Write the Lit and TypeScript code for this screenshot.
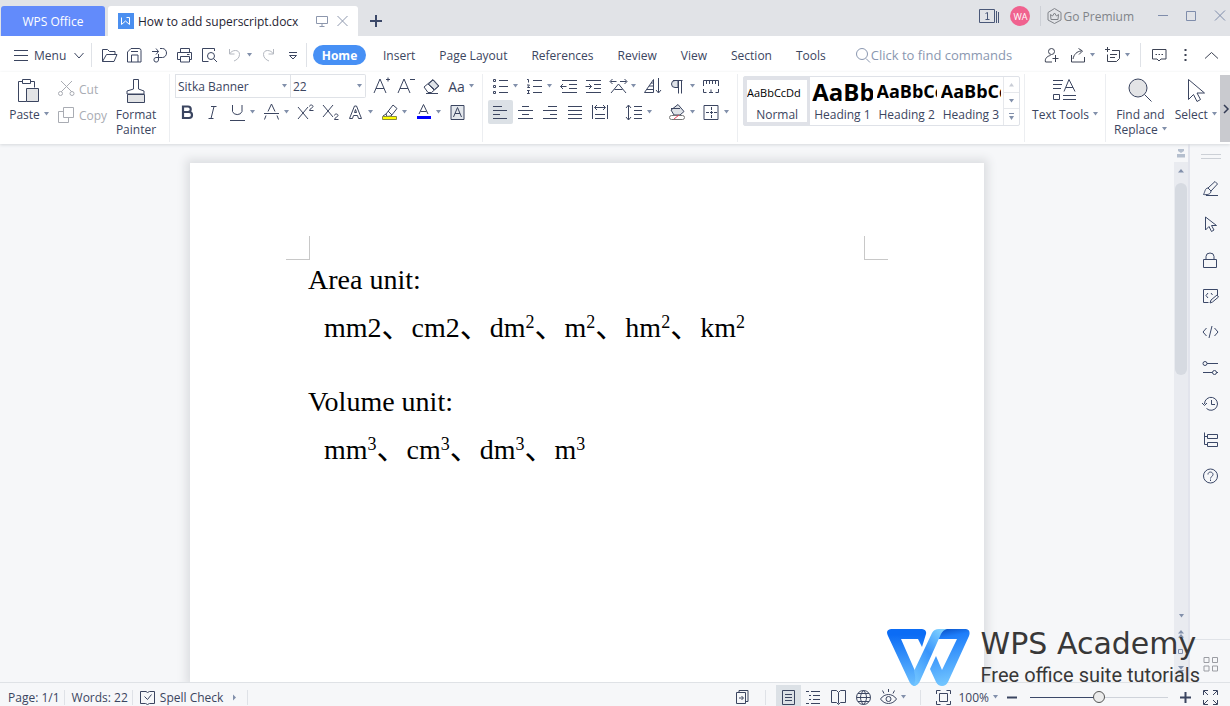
import { LitElement, html, css, svg, nothing } from "lit";
import { customElement, state } from "lit/decorators.js";
import { classMap } from "lit/directives/class-map.js";

const box = (w: number, h: number, body: unknown) =>
  html`<svg width=${w} height=${h} viewBox="0 0 ${w} ${h}" aria-hidden="true">${body}</svg>`;
const p = (d: string) => svg`<path d=${d} />`;
const fill = (d: string, c = "currentColor") => svg`<path d=${d} fill=${c} stroke="none" />`;

const ICONS: Record<string, unknown> = {
  open: p("M5.500 18.500V6.500h5l2 2h5.500v3M5.500 18.500l4-7h10.500l-3 7z"),
  save: p("M9 5.500h8a2 2 0 0 1 2 2v11.500h-13.500V9zM9.500 19v-7h6.500v7M9 8.500h7"),
  exportPdf: p("M5 8.500h6.500M9 5.500l2.500 3-2.500 3M13 5.500h2.500a4 4.500 0 0 1 0 9h-6.500a2.300 2.300 0 1 0 2.500 2.500V11"),
  print: p("M8.500 9.500v-4h9v4M8.500 16.500h-3v-7h14v7h-2M8.500 13.500h9v5.500h-9zM15 11.500h2.500"),
  preview: p("M17.500 8v-2.500h-12v13h6M17.500 13a3.500 3.500 0 1 1-7 0a3.500 3.500 0 0 1 7 0M16.500 15.500l3.500 3.500"),
  undo: p("M7.500 6v5h5M7.500 11C10 6.500 17.500 6 17.500 11.500C17.500 15 14.500 17 12 18"),
  redo: p("M17.500 6v5h-5M17.500 11C15 6.500 7.500 6 7.500 11.500C7.500 15 10.500 17 13 18"),
  more: p("M8 9.500h8M8.500 12.500h7l-3.500 3.500z"),
  userAdd: p("M15.500 8.500a3 3 0 1 1-6 0a3 3 0 0 1 6 0M13 19H6.500c-1-3 1.500-6 5-6.500M16.500 12v7M13.500 15.500h6"),
  share: p("M6.500 12v7h13v-5M8 16c1-5 4-7.500 8-8M13.500 5.500l4 2.500-3.500 3.500"),
  note: p("M5 6.500h5M7.500 4v5M12 7.500h7.500v8l-3 3h-9v-7M10 11.500h7M10 14.500h5"),
  comment: p("M5.500 6.500h13.500v9.500h-5l-2 2-2-2h-4.500zM8.500 11.500h1.500M11.500 11.500h1.500M14.500 11.500h1.500"),
  dots: fill("M11.500 6h2v2h-2zM11.500 11h2v2h-2zM11.500 16h2v2h-2z"),
  up: p("M6 15.500l6.500-6 6.500 6"),
  paste: svg`<path d="M5.500 3.500h-4v20h8M13.500 3.500h4v6M5.500 1.500h8v4h-8z" /><path d="M9.500 10.500h12v13h-12z" fill="#e3e4e6" />`,
  cut: p("M7 4l11 11M18 4L7 15M8.500 16.500a2 2 0 1 1-4 0a2 2 0 0 1 4 0M20 16.500a2 2 0 1 1-4 0a2 2 0 0 1 4 0"),
  copy: p("M9.500 4.500h10v10h-10zM9.500 8.500h-5v11h10v-5"),
  painter: svg`<path d="M10.500 11V1.500h5V11l5.500 2v3h-17v-3z" /><path d="M4.500 16.500h17v8h-17z" fill="#e3e4e6" />`,
  grow: p("M5 19l6-14 6 14M7 14.500h8M17 5.500h4M19 3.500v4"),
  shrink: p("M4 19l6-14 6 14M6 14.500h8M16 5.500h5"),
  eraser: svg`<path d="M5 13l9-7.500 6 6.500-7.500 6.500h-3.500zM9 10l6 6M7 19.500h12" /><path d="M9.500 10l4.500-4 5.500 6-4 3.500z" fill="#dfe3e8" />`,
  bold: svg`<path d="M8 6.500h5a2.700 2.700 0 0 1 0 5.500h-5zM8 12h6a3 3 0 0 1 0 6h-6z" stroke-width="2.200" />`,
  italic: p("M11 6.500h5.500M8.500 18.500h5M14 6.500l-3 12"),
  underline: p("M7.500 5v6.500a5 4.500 0 0 0 9.500 0V5M5 20.500h15"),
  strike: p("M5 13.500h15M9 11.500l3.500-7.500 3.500 7.500M7 15.500l-1.500 4M18 15.500l1.500 4"),
  sup: p("M5 7l10 12M15 7L5 19M16.500 6.500c0-2 3.500-2 3.500 0c0 1.500-3.500 2-3.500 4h4"),
  sub: p("M5 5l10 12M15 5L5 17M16.500 15.500c0-2 3.500-2 3.500 0c0 1.500-3.500 2-3.500 4h4"),
  effect: svg`<path d="M6.500 18.500l5-12.500h2l5 12.500h-3l-1-3h-4l-1 3z" /><path d="M11.500 12.500l1-3 1 3z" />`,
  highlight: svg`<path d="M9 14l7-9 4 3.500-6 7.500-4 .5zM9 14l-3 2M11 11l4 4" /><path d="M5.500 16.500h14v3h-14z" fill="#ffff00" stroke="#8a8a40" />`,
  color: svg`<path d="M8 14l4.500-9.500 4.500 9.500M9.500 11.500h6" /><path d="M6 16h14v3H6z" fill="#0000ff" stroke="none" />`,
  charBox: svg`<path d="M6 5.500h13v14H6z" fill="#e3e7ec" /><path d="M8.500 17l4-9.500 4 9.500M10 13.500h5" />`,
  bullets: p("M11 6.500h9M11 12.500h9M11 18.500h9M5.500 5.500h2v2h-2zM5.500 11.500h2v2h-2zM5.500 17.500h2v2h-2z"),
  numbers: p("M11 6.500h9M11 12.500h9M11 18.500h9M5 5.500h1.500v3M5 11h2.500l-2 2.500h2.500M5 16.500h2.500l-1.500 1.500 1.500 1.500h-2.500"),
  outdent: p("M6 6.500h15M13 10.500h8M13 14.500h8M6 18.500h15M4.500 12.500h6M7 10l-2.500 2.500 2.500 2.500"),
  indent: p("M5 6.500h15M13 10.500h7M13 14.500h7M5 18.500h15M4.500 12.500h6M8 10l2.500 2.500-2.500 2.500"),
  scale: p("M5 19l7.500-9 7.500 9M8.500 15.500h8M4.500 7.500h6M14 7.500h6.500M6.500 5l-2.500 2.500 2.500 2.500M18.500 5l2.500 2.500-2.500 2.500"),
  sort: p("M4.500 18.500h9V5.500zM7 15.500h6M9 12h4.500M11 9h2.500M18.500 4v14.500M16 16l2.500 3 2.500-3"),
  pilcrow: svg`<path d="M13 6.500h-3a3 3 0 0 0 0 7h3z" fill="#dfe3e8" /><path d="M8 6.500h9.500M13.500 6.500v13M16.500 6.500v13" />`,
  ruler: p("M4.500 12V6.500h15V12M7.500 7v3M10.500 7v3M13.500 7v3M16.500 7v3M4.500 15v3.500h3M19.500 15v3.500h-3M10 18.500h4M12 15.500v3"),
  left: p("M5 6.500h9M5 10.500h14M5 14.500h7M5 18.500h14"),
  center: p("M9 6.500h7M5 10.500h15M9 14.500h7M5 18.500h15"),
  right: p("M10 6.500h9M5 10.500h14M12 14.500h7M5 18.500h14"),
  justify: p("M5 6.500h14M5 10.500h14M5 14.500h14M5 18.500h14"),
  distribute: p("M4.500 5v14M19.500 5v14M7 14.500h10M7 18.500h10M7 7.500h10M9 5L6.500 7.500 9 10M15 5l2.500 2.500-2.500 2.500"),
  spacing: p("M6.500 5.500v14M4 8l2.500-3 2.500 3M4 17l2.500 3 2.500-3M12 6.500h8M12 10.500h8M12 14.500h8M12 18.500h8"),
  bucket: svg`<path d="M6 10l7-5.500 6 7-4 3.500h-6zM6 8.500h9" fill="#dfe3e8" /><rect x="4.500" y="15.500" width="15" height="4" rx="2" stroke="#777" fill="#fff" /><path d="M9 19l5-4" stroke="#e8405a" />`,
  border: svg`<path d="M5 5.500h14v14H5z" /><path d="M12.500 7v11M7 12.500h11" stroke-dasharray="3 1" />`,
  textTools: p("M1 2.500h10M1 6.500h9M1 10.500h8M1.500 16.500h6v5h-6zM11 17.500h13M11 21.500h13M12 13.500l5-12 6 12M14 9.500h7"),
  find: svg`<circle cx="11" cy="10" r="9" fill="#e3e4e6" /><path d="M17.500 16.500l7 7" />`,
  pointer: p("M5.500 1.500v20l5-5 3.500 7 3.500-2-3.500-6.500h7.500z"),
  brush: p("M10 12l7-6.500 2.500 2.500-6.500 7M10 12c-3 0-3 4-4.500 6.500c3 .5 7.500 0 7.500-3.500zM8 19.500h12"),
  arrow: p("M7.500 5v13l3.500-3.500 2.500 5 2.500-1.500-2.500-4.500h5z"),
  lock: p("M5.500 11.500h13v8h-13zM8 11V8.500a4 3.500 0 0 1 8 0V11"),
  macro: p("M19.500 11V5.500h-14v13h5M10 9l-2 2.500 2 2.500M13 9l1.500 2M12 19l1-3 6-5 1.500 2-6 5z"),
  code: p("M8.500 8L5 12l3.500 4M16.500 8l3.500 4-3.500 4M14 6l-3 12"),
  sliders: p("M9 7.500h11M5 16.500h9.500M9 7.500a2 2 0 1 1-4 0a2 2 0 0 1 4 0M18.500 16.500a2 2 0 1 1-4 0a2 2 0 0 1 4 0M18.500 16.500h1.500"),
  history: p("M6.500 12a6.500 6.500 0 1 1 2 4.500M4 11l2.500 2.500L9 11M13.500 8v4.500h3.500"),
  tree: p("M6.500 4.500v12h3M6.500 8.500h3M9.500 6.500h10v4h-10zM9.500 14.500h10v4h-10z"),
  help: p("M19.500 12a7 7 0 1 1-14 0a7 7 0 0 1 14 0M10 10.500c0-3.500 5-3 5 0c0 2-2.500 2-2.500 4M12.500 15.500v1.500"),
  grid: p("M6 5.500h5v5H6zM14.500 5.500h5v5h-5zM6 14h5v5H6zM14.500 14h5v5h-5z"),
  spell: p("M11 6.500h-5.500v12h5l2 1 2-1h5v-12h-5l-2 1zM9.500 11.500l3 3 4-5"),
  pageNav: p("M6.500 7.500h9v11h-9zM9 7V5.500h9v11h-2M9 13h4M11.500 11l2 2-2 2"),
  pageView: p("M6.500 5.500h12v14h-12zM9 9.500h7M9 12.500h7M9 15.500h7"),
  outline: p("M5 6.500h3M10 6.500h9M8 10.500h2M12 10.500h7M8 14.500h2M12 14.500h7M5 18.500h3M10 18.500h9"),
  read: p("M12.500 7.500l-2-2H5.500v12h5l2 2 2-2h5v-12h-5zM12.500 7.500v11"),
  web: p("M19.500 12.500a7 7 0 1 1-14 0a7 7 0 0 1 14 0M5.500 12.500h14M12.500 5.500c-4 4-4 10 0 14c4-4 4-10 0-14M7 8.500h11M7 16.500h11"),
  eye: p("M4.500 14c4-6 12-6 16 0c-4 6-12 6-16 0M15 14a2.500 2.500 0 1 1-5 0a2.500 2.500 0 0 1 5 0M12.500 4v3M6.500 5.500l1.500 3M18.500 5.500l-1.500 3"),
  fit: p("M5.500 9V5.500h4M15.500 5.500h4V9M19.500 16v3.500h-4M9.500 19.500h-4V16M8.500 8.500h8v8h-8z"),
  minus: svg`<path d="M7 12.500h10" stroke-width="2" />`,
  plus: svg`<path d="M7 12.500h11M12.500 7v11" stroke-width="2" />`,
  full: p("M5.500 10V5.500H10M6 6l4 4M15 5.500h4.500V10M19 6l-4 4M19.500 15v4.500H15M19 19l-4-4M10 19.500H5.500V15M6 19l4-4"),
};

const icon = (name: string, w = 25, h = 24) => box(w, h, ICONS[name]);
const caret = () => box(5, 4, fill("M0 0h5L2.500 3.500z", "#8290ab"));

type Tool = { id: string; label: string; drop?: boolean; gap?: boolean; on?: boolean; dim?: boolean };
const t = (id: string, label: string, opts: Partial<Tool> = {}): Tool => ({ id, label, ...opts });
const drop = { drop: true };

const QUICK = [t("open", "Open"), t("save", "Save"), t("exportPdf", "Export to PDF"), t("print", "Print"), t("preview", "Print preview"),
  t("undo", "Undo", { drop: true, dim: true }), t("redo", "Redo", { dim: true }), t("more", "Customize")];
const TABS = ["Insert", "Page Layout", "References", "Review", "View", "Section", "Tools"];
const FONT1 = [t("grow", "Increase font size"), t("shrink", "Decrease font size"), t("eraser", "Clear formatting")];
const FONT2 = [t("bold", "Bold"), t("italic", "Italic"), t("underline", "Underline", drop), t("strike", "Strikethrough", drop),
  t("sup", "Superscript"), t("sub", "Subscript"), t("effect", "Text effects", drop), t("highlight", "Highlight", drop),
  t("color", "Font color", drop), t("charBox", "Character shading")];
const PARA1 = [t("bullets", "Bullets", drop), t("numbers", "Numbering", drop), t("outdent", "Decrease indent"), t("indent", "Increase indent"),
  t("scale", "Character scaling", drop), t("sort", "Sort"), t("pilcrow", "Paragraph marks", drop), t("ruler", "Tabs")];
const PARA2 = [t("left", "Align left", { on: true }), t("center", "Center"), t("right", "Align right"), t("justify", "Justify"),
  t("distribute", "Distribute", { gap: true }), t("spacing", "Line spacing", { drop: true, gap: true }), t("bucket", "Shading", drop), t("border", "Borders", drop)];
const SIDE = [t("brush", "Styles"), t("arrow", "Select"), t("lock", "Protect"), t("macro", "Edit code"), t("code", "Source"),
  t("sliders", "Settings"), t("history", "History"), t("tree", "Structure"), t("help", "Help")];
const STYLES = [["AaBbCcDd", "Normal", "s0"], ["AaBb", "Heading 1", "s1"], ["AaBbCc", "Heading 2", "s2"], ["AaBbCc", "Heading 3", "s2"]];

const AREA: [string, string, boolean][] = [["mm", "2", false], ["cm", "2", false], ["dm", "2", true], ["m", "2", true], ["hm", "2", true], ["km", "2", true]];
const VOLUME: [string, string, boolean][] = [["mm", "3", true], ["cm", "3", true], ["dm", "3", true], ["m", "3", true]];

@customElement("app-root")
export class AppRoot extends LitElement {
  @state() private zoom = 50;

  static styles = css`
    :host { display: flex; flex-direction: column; height: 100vh; position: relative; overflow: hidden;
      font: 12px/15px "Open Sans", "Noto Sans", sans-serif; color: #3b4560; background: #f6f7f9; }
    * { box-sizing: border-box; }
    svg { display: block; flex: none; fill: none; stroke: currentColor; }
    button, input, select { font: inherit; color: inherit; border: 0; margin: 0; padding: 0; background: none; }
    button { display: flex; align-items: center; white-space: nowrap; }
    .grow { flex: 1; }
    .dim { color: #b4b8c0; }
    .split { display: flex; align-items: center; }
    .split.gap { margin-right: 9px; }
    .drop { width: 9px; height: 24px; }
    .on { background: #dce1e6; border-radius: 2px; }
    .vline { width: 1px; height: 24px; background: #dfe2e7; flex: none; }

    .title { display: flex; height: 36px; background: #e1e3e7; padding-left: 1px; flex: none; }
    .office, .doc { height: 30px; margin-top: 6px; border-radius: 3px 3px 0 0; display: flex; align-items: center; }
    .office { width: 104px; justify-content: center; background: #628bfb; color: #fff; }
    .doc { width: 250px; margin-left: 3px; padding: 0 10px; background: #fff; color: #1f2433; white-space: nowrap; }
    .doc span { margin: 0 auto 0 4px; }
    .doc button { margin-left: 9px; color: #8d97ad; }
    .add { margin: 6px 0 0 12px; color: #3b4868; }
    .window { display: flex; align-items: center; height: 32px; margin-left: auto; color: #4a5878; }
    .window .vline { height: 20px; background: #cdd0d6; }
    .avatar { width: 20px; height: 20px; margin: 0 10px; border-radius: 50%; background: #f0628f; color: #fff; font-size: 9px; justify-content: center; }
    .premium { color: #808389; margin: 0 21px 0 6px; gap: 1px; }
    .win { color: #7f8dab; margin-right: 4px; }

    .menu { display: flex; align-items: center; height: 36px; padding: 2px 6px 0 9px; background: #fff; flex: none; }
    .main { width: 82px; }
    .main span { margin-right: auto; }
    .quick { display: flex; padding: 0 0 0 5px; }
    nav { display: flex; align-items: center; margin-left: 6px; }
    nav button { padding: 0 12px; height: 20px; }
    nav .home { width: 53px; padding: 0; justify-content: center; border-radius: 10px; background: #4790f5; color: #fff; font-weight: 700; margin-right: 5px; }
    .search { display: flex; align-items: center; margin-left: 15px; flex: 1; color: #8a97b0; min-width: 0; }
    .search input { width: 100%; font-size: 13px; outline: 0; }
    .search input::placeholder { color: #8a97b0; opacity: 1; }
    .right { display: flex; align-items: center; gap: 1px; color: #3d4354; }
    .right .vline { margin: 0 5px; }

    .ribbon { display: flex; height: 72px; background: #fff; padding-top: 2px; flex: none; box-shadow: 0 1px 3px #d5d8dc; position: relative; }
    .group { display: flex; padding: 0 4px 0 5px; border-right: 1px solid #eceef1; height: 68px; flex: none; }
    .group.first { padding: 0 8px 0 4px; }
    .rows { display: flex; flex-direction: column; gap: 2px; }
    .row { display: flex; height: 24px; }
    .big { flex-direction: column; padding-top: 4px; text-align: center; }
    .big .lab { margin-top: 3px; display: block; }
    .first .big { width: 50px; }
    .lab svg { display: inline-block; vertical-align: 3px; margin-left: 4px; }
    .clip { display: flex; flex-direction: column; padding-top: 2px; color: #a9acb3; width: 57px; }
    .clip button { height: 26px; }
    .field { display: grid; align-items: center; border: 1px solid #dfe2e7; width: 116px; }
    .field select { grid-area: 1 / 1; width: 100%; height: 22px; appearance: none; padding-left: 2px; outline: 0; }
    .field svg { grid-area: 1 / 1; justify-self: end; margin-right: 3px; pointer-events: none; }
    .size { width: 75px; margin-right: 3px; border-left: 0; border-radius: 0 2px 2px 0; }
    .aa { width: 25px; justify-content: center; font-size: 14px; }
    .styles { display: flex; width: 277px; height: 50px; margin-top: 2px; border: 1px solid #dfe2e8; border-radius: 2px; }
    .style { flex: 1; flex-direction: column; justify-content: flex-end; min-width: 0; padding: 0 2px 3px; overflow: hidden; }
    .style.sel { border: 3px solid #e0e2e8; padding: 0; }
    .style b { flex: 1; display: flex; align-items: center; color: #000; align-self: stretch; overflow: hidden; margin-bottom: 2px; }
    .style .s0 { font-weight: 400; font-size: 11px; }
    .s1 { font-size: 24px; }
    .s2 { font-size: 18px; }
    .scrollers { display: grid; width: 16px; grid-template-rows: repeat(3, 1fr); border-left: 1px solid #e6e8ec; }
    .scrollers button { justify-content: center; border-bottom: 1px solid #e6e8ec; color: #8290ab; }
    .scrollers button:last-child { border: 0; }
    .scrollers .dim { color: #c9cdd6; }
    .tt { width: 81px; justify-content: center; padding: 0; }
    .last { border: 0; padding: 0 0 0 8px; gap: 8px; }
    .expand { width: 10px; height: 67px; margin: 1px 0 0 auto; background: #c9cacf; color: #333c55; flex: none; }

    .work { flex: 1; display: flex; min-height: 0; }
    main { flex: 1; display: flex; justify-content: center; overflow: hidden; padding-top: 19px; min-width: 0; }
    .page { width: 794px; background: #fff; box-shadow: 0 0 9px 4px #dcdee1; flex: none; padding: 73px 96px 0; }
    .marks { display: flex; justify-content: space-between; }
    .marks i { width: 24px; height: 24px; border: solid #c8c8c8; border-width: 0 1px 1px 0; }
    .marks i + i { border-width: 0 0 1px 1px; }
    .text { padding: 0 22px; font: 28px/40px "Liberation Serif", "Noto Sans CJK SC", serif; color: #000; white-space: nowrap; }
    .text p { margin: 0 0 8px; }
    .text .units { padding-left: 16px; margin-bottom: 34px; }
    .sep { font: 30px/28px "Noto Sans CJK SC", sans-serif; }
    sup { font-size: 18px; line-height: 0; vertical-align: 9px; }

    .bar { width: 14px; display: flex; flex-direction: column; align-items: center; background: #e9ebf0; color: #8290ab; padding-bottom: 3px; }
    .bar .toggle { width: 14px; height: 18px; background: #f6f7f9; justify-content: center; }
    .bar .track { flex: 1; padding-top: 3px; }
    .bar .thumb { width: 12px; height: 192px; border-radius: 6px; background: #d6dae1; }
    .bar button { height: 18px; }
    .side { width: 42px; display: flex; flex-direction: column; gap: 12px; padding: 0 0 0 8px; border-left: 2px solid #e2e4ec; color: #3b4868; }
    .handle { width: 20px; height: 5px; margin: 10px 0 5px 3px; border: solid #ccd0d6; border-width: 1px 0; }
    .all { margin: auto 0 0 -8px; padding: 12px 0 6px 8px; border-top: 1px solid #e0e3e8; color: #9b9da3; }

    footer { display: flex; align-items: center; height: 24px; border-top: 1px solid #dfe2e6; background: #f6f7f9; padding: 5px 7px 0 8px; flex: none; }
    footer .vline { height: 15px; margin: 0 2px 0 4px; }
    footer .wide { margin: 0 10px; }
    .words { padding-left: 5px; }
    .percent { padding: 0 2px; }
    .views { display: flex; }
    .active { background: #dce1e6; }
    .zoom { width: 138px; height: 16px; margin: 0 5px; appearance: none; outline: 0; }
    .zoom::-webkit-slider-runnable-track { height: 1px; background: linear-gradient(90deg, #3b4868 50%, #cfd3da 50%); }
    .zoom::-webkit-slider-thumb { appearance: none; width: 12px; height: 12px; margin-top: -6px; border: 1px solid #555; border-radius: 50%; background: #ececec; }

    .brand { position: absolute; right: 30px; bottom: 17px; display: flex; gap: 11px; pointer-events: none; color: #383838; white-space: nowrap; }
    .brand svg { stroke: none; margin-top: 2px; }
    .brand .name { font: 30px/34px "DejaVu Sans", sans-serif; }
    .brand .tag { font: 20px/28px Roboto, sans-serif; }
  `;

  private tool(x: Tool) {
    return html`<div class=${classMap({ split: true, gap: !!x.gap, dim: !!x.dim })}>
      <button class=${classMap({ on: !!x.on })} aria-label=${x.label}>${icon(x.id)}</button>
      ${x.drop ? html`<button class="drop" aria-label="${x.label} options">${caret()}</button>` : nothing}
    </div>`;
  }

  private units(list: [string, string, boolean][]) {
    return html`<p class="units">${list.map(([u, n, raised], i) =>
      html`${i ? html`<span class="sep">、</span>` : nothing}${u}${raised ? html`<sup>${n}</sup>` : n}`)}</p>`;
  }

  private titleBar() {
    return html`<header class="title">
      <button class="office">WPS Office</button>
      <div class="doc">
        ${box(16, 16, svg`<path d="M0 0h16v16H0z" fill="#4b8ff0" stroke="none" /><path d="M3.500 4.500v7l4-3.500 4 3.500v-7h-3" stroke="#fff" />`)}
        <span>How to add superscript.docx</span>
        <button aria-label="Present">${box(12, 12, p("M.5 1.500h11v7H.5zM6 8.500v2.500M3.500 11.500h5"))}</button>
        <button aria-label="Close tab">${box(11, 12, p("M.5 1l10 10M10.500 1l-10 10"))}</button>
      </div>
      <button class="add" aria-label="New tab">${box(13, 12, svg`<path d="M6 0v12M0 6h12" stroke-width="2" />`)}</button>
      <div class="window">
        <button aria-label="Open windows">${box(21, 16, svg`<path d="M.5 1.500h15v13H.500zM17.500 3v12M19.500 4v11M6.500 5.500L8.500 4.500v7M6.500 11.500h4" />`)}</button>
        <button class="avatar" aria-label="Account">WA</button>
        <span class="vline"></span>
        <button class="premium">${box(15, 16, p("M7.500 .5l6.500 4v7.500l-6.500 3.500-6.500-3.500V4.500zM4 11.500L3.500 6.500l2 1.500 2-3 2 3 2-1.500-.5 5z"))}Go Premium</button>
        <button class="win" aria-label="Minimize">${box(24, 24, p("M3 11.500h10"))}</button>
        <button class="win" aria-label="Maximize">${box(24, 24, p("M3.500 7.500h9v9h-9z"))}</button>
        <button class="win" aria-label="Close">${box(15, 24, p("M4 6.500l10 10M14 6.500l-10 10"))}</button>
      </div>
    </header>`;
  }

  private menuBar() {
    return html`<div class="menu">
      <button class="main">${box(25, 24, p("M5 7.500h14M5 12.500h14M5 17.500h14"))}<span>Menu</span>${box(20, 24, p("M3.500 10l4.500 5 4.500-5"))}</button>
      <span class="vline"></span>
      <div class="quick">${QUICK.map((x) => this.tool(x))}</div>
      <span class="vline"></span>
      <nav><button class="home">Home</button>${TABS.map((x) => html`<button>${x}</button>`)}</nav>
      <label class="search">${box(18, 24, p("M14.500 11a5 5 0 1 1-11 0a5.500 5.500 0 0 1 11 0M13 15.500l4 4"))}
        <input type="text" aria-label="Search commands" placeholder="Click to find commands" /></label>
      <div class="right">
        ${this.tool(t("userAdd", "Collaborate"))}${this.tool(t("share", "Share", drop))}${this.tool(t("note", "Annotate", drop))}
        <span class="vline"></span>
        ${this.tool(t("comment", "Comments"))}${this.tool(t("dots", "More"))}${this.tool(t("up", "Collapse ribbon"))}
      </div>
    </div>`;
  }

  private ribbon() {
    return html`<div class="ribbon">
      <div class="group first">
        <button class="big">${icon("paste", 24, 26)}<span class="lab">Paste${caret()}</span></button>
        <div class="clip">
          <button>${icon("cut", 25, 24)}Cut</button>
          <button>${icon("copy", 25, 24)}Copy</button>
        </div>
        <button class="big">${icon("painter", 26, 26)}<span class="lab">Format<br />Painter</span></button>
      </div>
      <div class="group">
        <div class="rows">
          <div class="row">
            <div class="field"><select aria-label="Font"><option>Sitka Banner</option></select>${caret()}</div>
            <div class="field size"><select aria-label="Font size"><option>22</option></select>${caret()}</div>
            ${FONT1.map((x) => this.tool(x))}
            <div class="split"><button class="aa" aria-label="Change case">Aa</button><button class="drop" aria-label="Case options">${caret()}</button></div>
          </div>
          <div class="row">${FONT2.map((x) => this.tool(x))}</div>
        </div>
      </div>
      <div class="group">
        <div class="rows">
          <div class="row">${PARA1.map((x) => this.tool(x))}</div>
          <div class="row">${PARA2.map((x) => this.tool(x))}</div>
        </div>
      </div>
      <div class="group">
        <div class="styles">
          ${STYLES.map(([sample, name, cls], i) => html`<button class=${classMap({ style: true, sel: i === 0 })}><b class=${cls}>${sample}</b>${name}</button>`)}
          <div class="scrollers">
            <button class="dim" aria-label="Previous styles">${box(5, 4, fill("M0 3.500h5L2.500 0z"))}</button>
            <button aria-label="Next styles">${caret()}</button>
            <button aria-label="All styles">${box(5, 8, svg`<path d="M0 .5h5" />${fill("M0 3h5L2.500 7z")}`)}</button>
          </div>
        </div>
      </div>
      <div class="group tt"><button class="big">${icon("textTools", 26, 26)}<span class="lab">Text Tools${caret()}</span></button></div>
      <div class="group last">
        <button class="big">${icon("find", 26, 26)}<span class="lab">Find and<br />Replace${caret()}</span></button>
        <button class="big">${icon("pointer", 26, 26)}<span class="lab">Select${caret()}</span></button>
      </div>
      <button class="expand" aria-label="More tools">${box(10, 10, svg`<path d="M4 1l4 4-4 4" stroke-width="1.500" />`)}</button>
    </div>`;
  }

  private status() {
    const view = (id: string, label: string, on = false) => html`<button class=${classMap({ active: on })} aria-label=${label}>${icon(id)}</button>`;
    return html`<footer>
      <span>Page: 1/1</span><span class="vline"></span>
      <span class="words">Words: 22</span><span class="vline"></span>
      <button>${icon("spell")}Spell Check${box(20, 24, fill("M10 9.500v6l3-3z", "#8290ab"))}</button><span class="vline"></span>
      <span class="grow"></span>
      ${view("pageNav", "Page navigation")}<span class="vline wide"></span>
      <div class="views">
        ${view("pageView", "Print layout", true)}${view("outline", "Outline")}${view("read", "Reading")}${view("web", "Web layout")}${this.tool(t("eye", "Eye protection", drop))}
      </div>
      <span class="vline wide"></span>
      ${view("fit", "Fit page")}
      <button class="percent">100%<span class="lab">${caret()}</span></button>
      ${view("minus", "Zoom out")}
      <input class="zoom" type="range" min="0" max="100" aria-label="Zoom" .value=${String(this.zoom)}
        @input=${(e: Event) => (this.zoom = Number((e.target as HTMLInputElement).value))} />
      ${view("plus", "Zoom in")}${view("full", "Full screen")}
    </footer>`;
  }

  private brand() {
    return html`<div class="brand">
      <svg width="83" height="58" viewBox="0 0 83 58" role="img" aria-label="WPS Academy logo">
        <defs>
          <linearGradient id="a" x1="0" y1="0" x2="0" y2="1"><stop offset="0.100" stop-color="#0b6cf5" /><stop offset="1" stop-color="#6cc0ff" /></linearGradient>
          <linearGradient id="b" x1="0.800" y1="0" x2="0.200" y2="1"><stop offset="0" stop-color="#7fd0ff" /><stop offset="0.450" stop-color="#3894fb" /><stop offset="1" stop-color="#72c5ff" /></linearGradient>
          <linearGradient id="c" x1="0" y1="0" x2="0.150" y2="1"><stop offset="0" stop-color="#0647b8" /><stop offset="0.200" stop-color="#1d7dfa" /><stop offset="1" stop-color="#72c5ff" /></linearGradient>
        </defs>
        <path fill="url(#a)" d="M4 0H35Q40 1 39 5L35 18 31 10H14L32 51 28 57Q24 57 22 52L1 7Q-2 1 4 0z" />
        <path fill="url(#c)" d="M54 0H79Q84 1 82 7L61 53Q59 57 55 57Q51 57 49 53L43 40 49 27 55 41 70 10H50z" />
        <path fill="url(#b)" d="M27 42L45 4Q47 0 52 0H60Q56 1 54 5L33 52Q31 57 26 57Q30 52 27 42z" />
      </svg>
      <div><div class="name">WPS Academy</div><div class="tag">Free office suite tutorials</div></div>
    </div>`;
  }

  render() {
    return html`${this.titleBar()}${this.menuBar()}${this.ribbon()}
      <div class="work">
        <main><article class="page">
          <div class="marks"><i></i><i></i></div>
          <div class="text"><p>Area unit:</p>${this.units(AREA)}<p>Volume unit:</p>${this.units(VOLUME)}</div>
        </article></main>
        <div class="bar">
          <button class="toggle" aria-label="Show ruler">${box(8, 9, fill("M1 0h6v2L4 4 1 2zM0 5h8v3.500H0z", "#b5bfce"))}</button>
          <button aria-label="Scroll up">${box(6, 4, fill("M0 3.500h6L3 0z"))}</button>
          <div class="track"><div class="thumb"></div></div>
          <button aria-label="Scroll down">${caret()}</button>
          <button aria-label="Previous page">${box(6, 8, fill("M0 3.500h6L3 0zM0 7.500h6L3 4z"))}</button>
          <button aria-label="Browse object">${box(6, 6, p("M.5 .5h4v4h-4z"))}</button>
          <button aria-label="Next page">${box(6, 8, fill("M0 0h6L3 3.500zM0 4h6L3 7.500z"))}</button>
        </div>
        <aside class="side">
          <div class="handle"></div>
          ${SIDE.map((x) => this.tool(x))}
          <div class="all">${this.tool(t("grid", "All panels"))}</div>
        </aside>
      </div>
      ${this.status()}${this.brand()}`;
  }
}
